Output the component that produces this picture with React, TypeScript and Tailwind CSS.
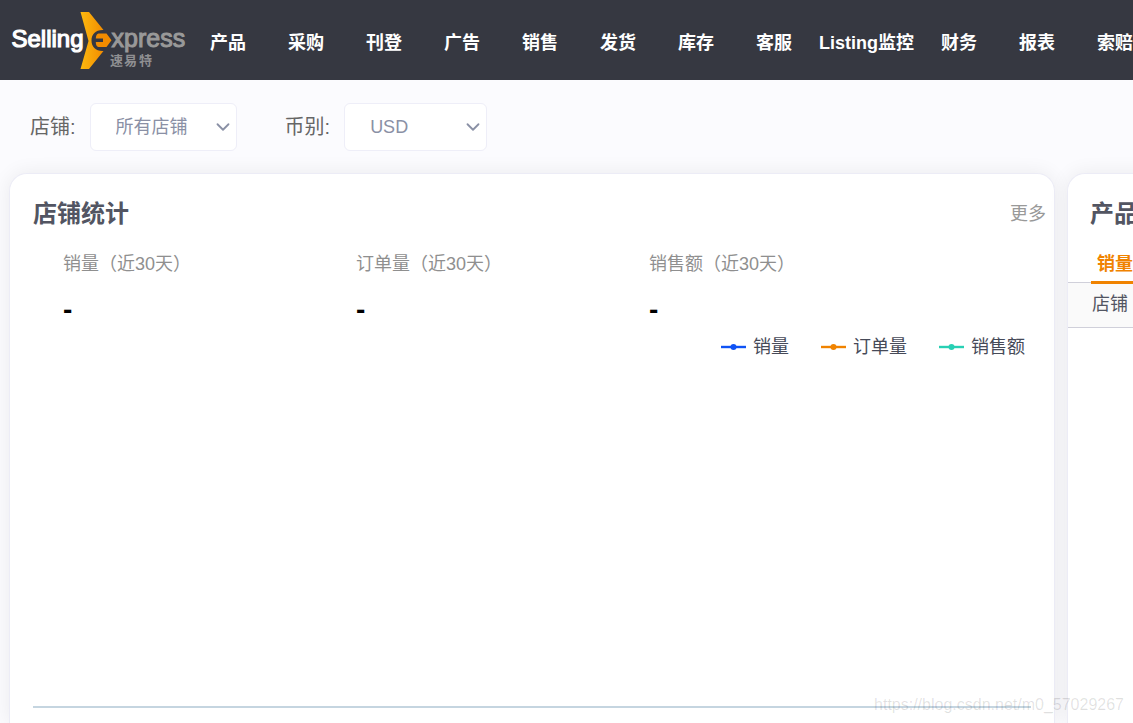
import { ChevronDown } from "lucide-react";

const navItems = [
  "产品",
  "采购",
  "刊登",
  "广告",
  "销售",
  "发货",
  "库存",
  "客服",
  "Listing监控",
  "财务",
  "报表",
  "索赔",
];

const stats = [
  { label: "销量（近30天）", value: "-" },
  { label: "订单量（近30天）", value: "-" },
  { label: "销售额（近30天）", value: "-" },
];

const legend = [
  { name: "销量", color: "#0f53f5" },
  { name: "订单量", color: "#f08300" },
  { name: "销售额", color: "#28d0b4" },
];

function Logo() {
  return (
    <a href="#" aria-label="SellingExpress 速易特" className="shrink-0">
      <svg width="189" height="80" viewBox="0 0 189 80">
        <defs>
          <linearGradient id="wing" x1="0" y1="0" x2="1" y2="0">
            <stop offset="0" stopColor="#fdb90f" />
            <stop offset="1" stopColor="#f28c00" />
          </linearGradient>
        </defs>
        <path
          d="M80.500 12H89L103.500 30C96 29.500 91.500 34 91.500 40.500C91.500 47 96 51.500 103.500 51L89 69H80.500L88.500 41Z"
          fill="url(#wing)"
        />
        <path
          d="M98.500 33.500H106.500L111.500 40.300L106.500 47H98.500Q95.800 46.500 95.800 42H103V38.500H95.800Q96 34 98.500 33.500Z"
          fill="#f28c00"
        />
        <text
          x="11.500"
          y="47"
          fontSize="24"
          fill="#ffffff"
          stroke="#ffffff"
          strokeWidth="1.200"
          fontFamily="Liberation Sans, sans-serif"
        >
          Selling
        </text>
        <text
          x="111.500"
          y="47"
          fontSize="25"
          fill="#999999"
          stroke="#999999"
          strokeWidth="1"
          fontFamily="Liberation Sans, sans-serif"
        >
          xpress
        </text>
        <text
          x="110 124 139"
          y="65"
          fontSize="13"
          fontWeight="700"
          fill="#8f8f92"
          fontFamily="Noto Sans CJK SC, sans-serif"
        >
          速易特
        </text>
      </svg>
    </a>
  );
}

function TopNav() {
  return (
    <header className="flex h-20 items-center overflow-hidden bg-[#363841]">
      <Logo />
      <nav className="flex h-full shrink-0">
        {navItems.map((item) => (
          <a
            key={item}
            href="#"
            className="flex h-full min-w-[78px] items-center justify-center px-[6px] pt-[6px] text-[18px] font-bold whitespace-nowrap text-white"
          >
            {item}
          </a>
        ))}
      </nav>
    </header>
  );
}

type FilterProps = {
  id: string;
  label: string;
  option: string;
  className: string;
};

function FilterSelect({ id, label, option, className }: FilterProps) {
  return (
    <div className="flex items-center">
      <label htmlFor={id} className="text-[20px] text-[#666666]">
        {label}
      </label>
      <div className="relative ml-[14px]">
        <select
          id={id}
          className={`h-12 appearance-none rounded-md border border-[#eeeef8] bg-white pl-[25px] text-[18px] text-[#8a90a5] ${className}`}
        >
          <option>{option}</option>
        </select>
        <ChevronDown
          size={22}
          strokeWidth={2}
          className="pointer-events-none absolute top-[13px] right-[3px] text-[#8a90a5]"
        />
      </div>
    </div>
  );
}

function ShopStats() {
  return (
    <section className="flex min-w-0 flex-col rounded-t-[18px] border border-b-0 border-[#ececf6] bg-white pb-[15px] pl-[23px] shadow-[0_0_20px_rgba(0,0,0,0.07)]">
      <div className="flex items-center justify-between pt-[22px] pr-2">
        <h2 className="text-[24px] leading-9 font-bold text-[#525562]">
          店铺统计
        </h2>
        <a href="#" className="text-[18px] text-[#999999]">
          更多
        </a>
      </div>
      <dl className="mt-5 grid grid-cols-[repeat(3,minmax(0,293px))] pl-[30px]">
        {stats.map((s) => (
          <div key={s.label}>
            <dt className="text-[18px] leading-6 whitespace-nowrap text-[#8f8f8f]">
              {s.label}
            </dt>
            <dd className="mt-4 text-[28px] leading-9 font-bold text-black">
              {s.value}
            </dd>
          </div>
        ))}
      </dl>
      <ul className="mt-[7px] flex justify-end gap-8 pr-[29px]">
        {legend.map((l) => (
          <li
            key={l.name}
            className="flex items-center gap-[7px] text-[18px] leading-6 text-[#464a58]"
          >
            <svg width="25" height="8" viewBox="0 0 25 8">
              <path d="M0 4H25" stroke={l.color} strokeWidth="2.400" />
              <circle cx="12.500" cy="4" r="3" fill={l.color} />
            </svg>
            {l.name}
          </li>
        ))}
      </ul>
      <div className="mr-[23px] flex-1 border-b-2 border-[#c5d5e0]" />
    </section>
  );
}

function ProductStats() {
  return (
    <section className="min-w-[420px] rounded-t-[18px] border border-b-0 border-[#ececf6] bg-white shadow-[0_0_20px_rgba(0,0,0,0.07)]">
      <h2 className="pt-[22px] pl-[22px] text-[24px] leading-9 font-bold text-[#525562]">
        产品
      </h2>
      <div className="mt-3 border-b border-[#d0d0da] pl-[23px]">
        <button
          type="button"
          className="-mb-0.5 h-10 border-b-[3px] border-[#f08300] px-[6px] pt-1 text-[18px] font-bold text-[#f08300]"
        >
          销量
        </button>
      </div>
      <table className="w-full text-left text-[18px] text-[#525562]">
        <thead>
          <tr className="h-11 border-b border-[#d0d0da] bg-[#fafafa]">
            <th className="pl-6 font-normal">店铺</th>
          </tr>
        </thead>
      </table>
    </section>
  );
}

export default function App() {
  return (
    <div className="relative flex min-h-screen flex-col overflow-hidden bg-[#fbfbfe] font-['Liberation_Sans','Noto_Sans_CJK_SC',sans-serif]">
      <TopNav />
      <div className="flex gap-12 pt-[23px] pb-[22px] pl-[30px]">
        <FilterSelect
          id="shop"
          label="店铺:"
          option="所有店铺"
          className="w-[147px]"
        />
        <FilterSelect
          id="currency"
          label="币别:"
          option="USD"
          className="w-[143px]"
        />
      </div>
      <main className="grid flex-1 grid-cols-[minmax(0,1fr)_66px] gap-x-3 pl-[9px]">
        <ShopStats />
        <ProductStats />
      </main>
      <p className="absolute right-[9px] bottom-[6px] text-[16px] text-black/12">
        https://blog.csdn.net/m0_57029267
      </p>
    </div>
  );
}
